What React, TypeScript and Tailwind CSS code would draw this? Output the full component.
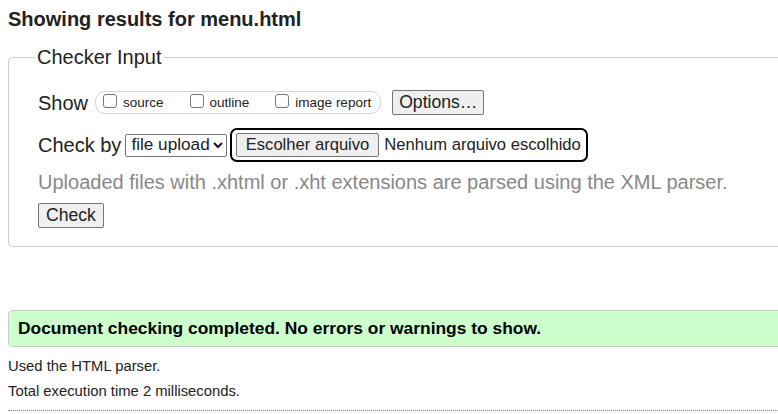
import React from "react"

function Box() {
  return (
    <span className="inline-block w-[14px] h-[14px] border border-[#767676] rounded-[3px] bg-white shrink-0 mt-[-4px]" />
  )
}

function Opt({ label }: { label: string }) {
  return (
    <label className="flex items-center gap-[6px] text-[13.5px] leading-none">
      <Box />
      <span>{label}</span>
    </label>
  )
}

export default function App() {
  return (
    <div className="w-[778px] h-[414px] overflow-hidden bg-white text-[#222] font-['Liberation_Sans',Arial,sans-serif]">
      <div className="w-[860px] pl-[8px] pt-[8px]">
        <h1 className="text-[20px] font-bold leading-[23px] text-[#222]">Showing results for menu.html</h1>

        {/* checker form */}
        <fieldset className="mt-[15px] border border-[#cfcfcf] rounded-[4px] pl-[29px] pt-[21px] pb-[18px]">
          <legend className="text-[20px] leading-[23px] px-[1px] ml-[-2px]">Checker Input</legend>

          <div className="flex items-center h-[25px] text-[20px]">
            <span className="mr-[7px]">Show</span>
            <div className="flex items-center h-[23px] border border-[#d4d4d4] rounded-[10px] pl-[7px] pr-[9px] gap-[26px]">
              <Opt label="source" />
              <Opt label="outline" />
              <Opt label="image report" />
            </div>
            <button className="ml-[11px] h-[25px] px-[6px] bg-[#efefef] border border-[#767676] rounded-[2px] text-[17.6px] leading-none">
              Options…
            </button>
          </div>

          <div className="flex items-center h-[34px] mt-[13px] text-[20px]">
            <span className="mr-[4px]">Check by</span>
            <div className="flex items-center h-[23px] border border-[#767676] rounded-[2px] pl-[5px] pr-[2px] text-[17.2px] leading-none">
              <span>file upload</span>
              <svg width="12" height="12" viewBox="0 0 12 12" className="ml-[2px]">
                <path d="M2 4l4 4 4-4" fill="none" stroke="#111" strokeWidth="2" />
              </svg>
            </div>
            <div className="ml-[3px] flex items-center h-[34px] border-2 border-black rounded-[7px] pl-[4px] pr-[5px] text-[16.6px] leading-none">
              <button className="h-[24px] px-[9px] bg-[#efefef] border border-[#767676] rounded-[2px] leading-none">
                Escolher arquivo
              </button>
              <span className="ml-[5px]">Nenhum arquivo escolhido</span>
            </div>
          </div>

          <p className="mt-[9px] text-[20px] leading-[23px] text-[#888]">
            Uploaded files with .xhtml or .xht extensions are parsed using the XML parser.
          </p>

          <button className="mt-[9px] h-[25px] px-[7px] bg-[#efefef] border border-[#767676] rounded-[2px] text-[17.6px] leading-none">
            Check
          </button>
        </fieldset>

        <div className="mt-[63px] h-[37px] flex items-center bg-[#ccffcc] border border-[#c8c8c8] border-r-0 rounded-l-[5px] pl-[9px] text-[17.4px] font-bold text-black">
          Document checking completed. No errors or warnings to show.
        </div>

        <p className="mt-[7px] text-[14.8px] leading-[25px]">Used the HTML parser.</p>
        <p className="text-[14.8px] leading-[25px]">Total execution time 2 milliseconds.</p>
        <div className="mt-[6px] border-t border-dotted border-[#888]" />
      </div>
    </div>
  )
}
